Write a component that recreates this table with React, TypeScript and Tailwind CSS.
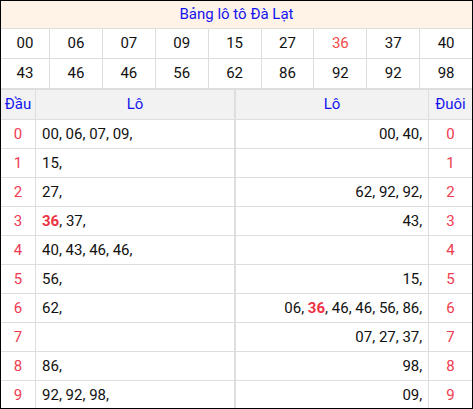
const TOP_ROWS = [
  ["00", "06", "07", "09", "15", "27", "36", "37", "40"],
  ["43", "46", "46", "56", "62", "86", "92", "92", "98"],
];

const HOT = "36";

const ROWS: { dau: string[]; duoi: string[] }[] = [
  { dau: ["00", "06", "07", "09"], duoi: ["00", "40"] },
  { dau: ["15"], duoi: [] },
  { dau: ["27"], duoi: ["62", "92", "92"] },
  { dau: ["36", "37"], duoi: ["43"] },
  { dau: ["40", "43", "46", "46"], duoi: [] },
  { dau: ["56"], duoi: ["15"] },
  { dau: ["62"], duoi: ["06", "36", "46", "46", "56", "86"] },
  { dau: [], duoi: ["07", "27", "37"] },
  { dau: ["86"], duoi: ["98"] },
  { dau: ["92", "92", "98"], duoi: ["09"] },
];

function NumList({ nums }: { nums: string[] }) {
  return (
    <>
      {nums.map((n, i) => (
        <span key={i}>
          {n === HOT ? <b className="font-bold text-[#ee3344]">{n}</b> : n}
          {", "}
        </span>
      ))}
    </>
  );
}

export default function App() {
  return (
    <div
      className="w-[473px] h-[409px] overflow-hidden border border-black bg-white text-[15px] leading-none text-[#111]"
      style={{ fontFamily: "Roboto, 'Liberation Sans', sans-serif" }}
    >
      {/* title */}
      <div className="flex h-[28px] items-center justify-center border-b border-[#dedede] bg-[#fff2e7] text-[#1414f0]">
        Bảng lô tô Đà Lạt
      </div>

      {/* numbers drawn */}
      {TOP_ROWS.map((row, r) => (
        <div key={r} className="flex h-[30px] border-b border-[#dedede]">
          {row.map((n, i) => (
            <div
              key={i}
              className={`flex items-center justify-center ${i === 0 ? "w-[49px] shrink-0" : "flex-1"} ${
                i < row.length - 1 ? "border-r border-[#dedede]" : ""
              } ${n === HOT ? "text-[#f04a4a]" : ""}`}
            >
              {n}
            </div>
          ))}
        </div>
      ))}

      {/* head / tail table */}
      <div className="border-t border-[#dedede]">
        <div className="flex h-[30px] border-b border-[#dedede] bg-[#f2f2f2] text-[#1414f0]">
          <div className="flex w-[35px] shrink-0 items-center justify-center border-r border-[#dedede]">Đầu</div>
          <div className="flex w-[200px] shrink-0 items-center justify-center border-r-2 border-[#dedede]">Lô</div>
          <div className="flex flex-1 items-center justify-center border-r border-[#dedede]">Lô</div>
          <div className="flex w-[43px] shrink-0 items-center justify-center">Đuôi</div>
        </div>
        {ROWS.map((row, i) => (
          <div key={i} className="flex h-[29px] border-b border-[#dedede]">
            <div className="flex w-[35px] shrink-0 items-center justify-center border-r border-[#dedede] text-[#ee3b50]">
              {i}
            </div>
            <div className="flex w-[200px] shrink-0 items-center whitespace-pre border-r-2 border-[#dedede] pl-[6px]">
              <NumList nums={row.dau} />
            </div>
            <div className="flex flex-1 items-center justify-end whitespace-pre border-r border-[#dedede] pr-[2px]">
              <NumList nums={row.duoi} />
            </div>
            <div className="flex w-[43px] shrink-0 items-center justify-center text-[#ee3b50]">{i}</div>
          </div>
        ))}
      </div>
    </div>
  );
}
